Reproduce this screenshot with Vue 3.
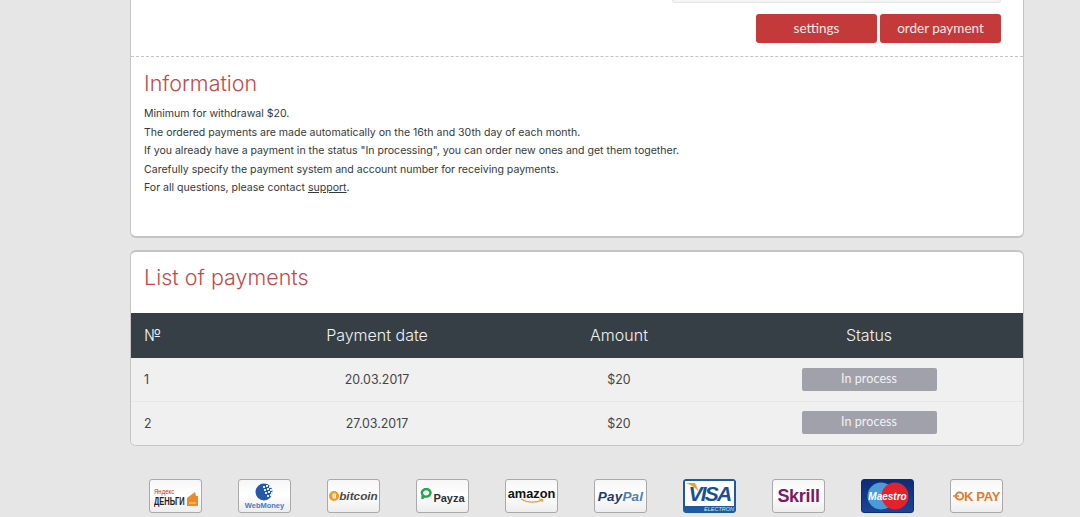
<script setup>
const lines = [
  'Minimum for withdrawal $20.',
  'The ordered payments are made automatically on the 16th and 30th day of each month.',
  'If you already have a payment in the status "In processing", you can order new ones and get them together.',
  'Carefully specify the payment system and account number for receiving payments.'
]
const rows = [
  { n: 1, date: '20.03.2017', amount: '$20' },
  { n: 2, date: '27.03.2017', amount: '$20' }
]
</script>

<template>
  <div class="page">
    <section class="card first">
      <div class="top">
        <div class="field"></div>
        <div class="actions">
          <button class="btn">settings</button>
          <button class="btn">order payment</button>
        </div>
      </div>
      <div class="info">
        <h2>Information</h2>
        <p v-for="l in lines" :key="l">{{ l }}</p>
        <p>For all questions, please contact <a>support</a>.</p>
      </div>
    </section>

    <section class="card second">
      <h2 class="list-title">List of payments</h2>
      <div class="row head">
        <div class="c-n">№</div>
        <div class="c-d">Payment date</div>
        <div class="c-a">Amount</div>
        <div class="c-s">Status</div>
      </div>
      <div v-for="r in rows" :key="r.n" class="row body">
        <div class="c-n">{{ r.n }}</div>
        <div class="c-d">{{ r.date }}</div>
        <div class="c-a">{{ r.amount }}</div>
        <div class="c-s"><span class="status">In process</span></div>
      </div>
    </section>

    <div class="logos">
      <div class="logo yandex">
        <div class="ya-text"><span class="ya-top">Яндекс</span><span class="ya-bot">ДЕНЬГИ</span></div>
        <svg class="ya-icon" width="11" height="15" viewBox="0 0 11 15"><path d="M0 7 L8 1 L9 5 L11 5 L11 15 L0 15 Z" fill="#f08a24"/><path d="M2 12h7" stroke="#fbd9a8" stroke-width="1"/></svg>
      </div>
      <div class="logo wm">
        <svg width="20" height="18" viewBox="0 0 20 18"><circle cx="9" cy="9" r="8.500" fill="#2458ad"/><g fill="#e3ebf7"><rect x="8" y="3" width="2" height="2"/><rect x="11" y="2" width="2" height="2"/><rect x="14" y="3" width="2" height="2"/><rect x="9" y="6" width="2" height="2"/><rect x="12" y="5" width="2" height="2"/><rect x="15" y="6" width="2" height="2"/><rect x="10" y="9" width="2" height="2"/><rect x="13" y="8" width="2" height="2"/><rect x="16" y="9" width="2" height="2"/><rect x="12" y="12" width="2" height="2"/><rect x="15" y="11" width="2" height="2"/></g></svg>
        <span class="wm-text">WebMoney</span>
      </div>
      <div class="logo btc">
        <svg width="10" height="10" viewBox="0 0 10 10"><circle cx="5" cy="5" r="5" fill="#f09a26"/><rect x="3.500" y="2.500" width="3.500" height="5" rx="1" fill="#fff"/><rect x="4.500" y="3.500" width="1.200" height="1" fill="#f09a26"/><rect x="4.500" y="5.500" width="1.200" height="1" fill="#f09a26"/></svg>
        <span>bitcoin</span>
      </div>
      <div class="logo payza">
        <svg class="pz-icon" width="12" height="11" viewBox="0 0 12 11"><path d="M6 1a4.300 3.800 0 1 1-1.500 7.300L2.500 10l.2-3A4.300 3.800 0 0 1 6 1Z" fill="none" stroke="#1fa84a" stroke-width="2.400"/></svg>
        <span>Payza</span>
      </div>
      <div class="logo amazon">
        <span>amazon</span>
        <svg width="26" height="6" viewBox="0 0 26 6"><path d="M2 1 C8 5 17 5 23 2" fill="none" stroke="#f09a26" stroke-width="1.200"/><path d="M20 1 L24 1.500 L23 4" fill="none" stroke="#f09a26" stroke-width="1"/></svg>
      </div>
      <div class="logo paypal"><b>Pay</b><b class="pal">Pal</b></div>
      <div class="logo visa">
        <div class="visa-inner">
          <svg class="swoosh" width="14" height="9" viewBox="0 0 14 9"><path d="M0 0 H9 L13 9 C10 5 5 2 0 0 Z" fill="#f0a020"/></svg>
          <span>VISA</span>
        </div>
        <span class="electron">ELECTRON</span>
      </div>
      <div class="logo skrill">Skrill</div>
      <div class="logo maestro">
        <svg width="51" height="32" viewBox="0 0 51 32"><circle cx="19" cy="16" r="13.500" fill="#4a9bd8"/><circle cx="33" cy="16" r="13.500" fill="#e3232c"/></svg>
        <span>Maestro</span>
      </div>
      <div class="logo okpay">
        <svg width="11" height="12" viewBox="0 0 11 12"><circle cx="6.500" cy="6" r="3.700" fill="none" stroke="#e8772e" stroke-width="1.800"/><path d="M0 6h6" stroke="#e8772e" stroke-width="1.500"/></svg>
        <span>K PAY</span>
      </div>
    </div>
  </div>
</template>

<style scoped>
.page {
  width: 1080px;
  height: 517px;
  overflow: hidden;
  background: #e6e6e6;
  font-family: Inter, "Liberation Sans", sans-serif;
  color: #33393d;
  padding-left: 130px;
  box-sizing: border-box;
}
.card {
  width: 894px;
  box-sizing: border-box;
  background: #fff;
  border: 1px solid #c4c4c4;
  border-bottom-width: 2px;
}
.first {
  height: 238px;
  border-top: 0;
  border-radius: 0 0 6px 6px;
}
.top {
  height: 57px;
  box-sizing: border-box;
  padding-right: 22px;
  border-bottom: 1px dashed #c4c4c4;
}
.field {
  width: 329px;
  height: 3px;
  margin-left: auto;
  box-sizing: border-box;
  background: #f4f4f4;
  border: 1px solid #e4e4e4;
  border-top: 0;
  border-radius: 0 0 5px 5px;
}
.actions {
  display: flex;
  justify-content: flex-end;
  gap: 3px;
  margin-top: 11px;
}
.btn {
  width: 121px;
  height: 29px;
  padding: 0 0 2px;
  border: 0;
  border-radius: 3px;
  background: #c43a3a;
  color: #f8e8e8;
  font-family: Lato, "Open Sans", sans-serif;
  font-size: 13.500px;
}
.info {
  padding: 12px 13px 0;
}
h2 {
  margin: 0;
  font-weight: 300;
  font-size: 21.500px;
  line-height: 28px;
  color: #c5494a;
}
.info h2 {
  margin-bottom: 8px;
}
.info p {
  margin: 0;
  font-size: 10.550px;
  line-height: 18.500px;
}
.info a {
  text-decoration: underline;
}
.second {
  height: 196px;
  margin-top: 12px;
  border-top-width: 2px;
  border-bottom-width: 1px;
  border-radius: 6px;
  overflow: hidden;
}
.list-title {
  height: 61px;
  padding: 11px 13px 0;
  box-sizing: border-box;
}
.row {
  display: grid;
  grid-template-columns: 124px 244px 240px 260px 1fr;
  align-items: center;
  text-align: center;
}
.row .c-n {
  text-align: left;
  padding-left: 13px;
}
.head {
  height: 45px;
  box-sizing: border-box;
  padding-bottom: 2px;
  background: #353f45;
  color: #f2f2f2;
  font-size: 16px;
  font-weight: 300;
}
.body {
  height: 43px;
  box-sizing: border-box;
  background: #f0f0f0;
  font-size: 12.400px;
  color: #444;
}
.body + .body {
  height: 44px;
  border-top: 1px solid #e6e6e6;
}
.status {
  display: block;
  width: 135px;
  height: 23px;
  margin: 0 auto;
  border-radius: 2px;
  background: #a1a1ab;
  color: #f2f2f4;
  font-family: Lato, "Open Sans", sans-serif;
  font-size: 12.500px;
  letter-spacing: 0.1px;
  line-height: 21px;
}
.body + .body .status {
  margin-top: -2px;
}
.logos {
  display: flex;
  gap: 36px;
  margin: 33px 0 0 19px;
}
.logo {
  width: 53px;
  height: 34px;
  flex: none;
  box-sizing: border-box;
  display: flex;
  align-items: center;
  justify-content: center;
  border: 1px solid #a9a9a9;
  border-radius: 3px;
  background: linear-gradient(#f6f6f6, #fff 45%, #ededed);
  font-family: "Liberation Sans", sans-serif;
  overflow: hidden;
}
.yandex {
  gap: 2px;
}
.ya-text {
  display: flex;
  flex-direction: column;
  width: 31px;
}
.ya-top {
  font-size: 8px;
  line-height: 9px;
  color: #b33;
  transform: scaleX(0.75);
  transform-origin: left;
}
.ya-bot {
  font-size: 11px;
  line-height: 10px;
  font-weight: 700;
  color: #222;
  transform: scaleX(0.68);
  transform-origin: left;
  white-space: nowrap;
}
.ya-icon {
  margin-top: 4px;
}
.wm {
  flex-direction: column;
  gap: 1px;
}
.wm-text {
  font-size: 7.500px;
  line-height: 8px;
  font-weight: 700;
  color: #4a78bd;
}
.btc {
  font-size: 11.800px;
  font-weight: 700;
  font-style: italic;
  color: #4a4a4a;
}
.payza {
  gap: 1px;
  font-size: 11px;
  font-weight: 700;
  color: #2c3136;
}
.payza span {
  margin-top: 4px;
}
.pz-icon {
  margin-top: -6px;
}
.amazon {
  flex-direction: column;
  font-size: 12.800px;
  font-weight: 700;
  color: #111;
}
.amazon span {
  line-height: 11px;
}
.amazon svg {
  margin-top: -1px;
}
.paypal {
  font-size: 13.500px;
  font-style: italic;
  letter-spacing: 0.2px;
}
.paypal b {
  color: #1d3a78;
}
.paypal .pal {
  color: #4f7fb8;
}
.visa {
  flex-direction: column;
  justify-content: flex-start;
  border-color: #1d5a9e;
  background: #1d5a9e;
}
.visa-inner {
  position: relative;
  width: 49px;
  height: 25px;
  margin-top: 1px;
  background: #fff;
  text-align: center;
  font-size: 21px;
  line-height: 25px;
  font-weight: 700;
  font-style: italic;
  letter-spacing: -1.800px;
  color: #1b4f95;
}
.swoosh {
  position: absolute;
  left: 1px;
  top: 2px;
}
.visa-inner span {
  position: relative;
}
.electron {
  width: 49px;
  text-align: right;
  font-size: 5.500px;
  line-height: 7px;
  font-style: italic;
  color: #dce6f2;
}
.skrill {
  font-size: 18px;
  font-weight: 700;
  color: #7b1a63;
  letter-spacing: -0.3px;
}
.maestro {
  position: relative;
  border-color: #0c2c74;
  background: linear-gradient(#0c2c74, #1a4596);
}
.maestro span {
  position: absolute;
  font-size: 10px;
  font-weight: 700;
  font-style: italic;
  color: #fff;
}
.okpay {
  font-size: 13px;
  font-weight: 700;
  color: #e8772e;
  letter-spacing: -0.3px;
}
</style>

<style>
html, body {
  margin: 0;
  overflow: hidden;
}
</style>
